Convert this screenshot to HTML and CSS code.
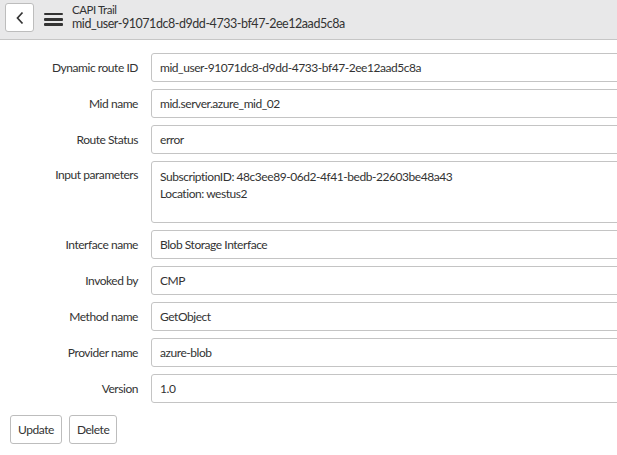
FILE: index.html
```html
<!DOCTYPE html>
<html>
<head>
  <title>CAPI Trail</title>
  <meta charset='utf-8'>
  <link rel="stylesheet" href="styles.css">
</head>
<body>

<div class='header'>
  <button class='back' type='button'>
    <svg width='10' height='14' viewBox='0 0 10 14'><path d='M7.5 1.5 L2.5 7 L7.5 12.5' fill='none' stroke='#333' stroke-width='1.7'/></svg>
  </button>
  <span class='burger'><i></i><i></i><i></i></span>
  <div class='title'>
    <div class='t1'>CAPI Trail</div>
    <div class='t2'>mid_user-91071dc8-d9dd-4733-bf47-2ee12aad5c8a</div>
  </div>
</div>

<form class='form'>
  <label class='row'><span class='lbl'>Dynamic route ID</span><span class='field'>mid_user-91071dc8-d9dd-4733-bf47-2ee12aad5c8a</span></label>
  <label class='row'><span class='lbl'>Mid name</span><span class='field'>mid.server.azure_mid_02</span></label>
  <label class='row'><span class='lbl'>Route Status</span><span class='field'>error</span></label>
  <label class='row'><span class='lbl top'>Input parameters</span><span class='field area'>SubscriptionID: 48c3ee89-06d2-4f41-bedb-22603be48a43<br>Location: westus2</span></label>
  <label class='row'><span class='lbl'>Interface name</span><span class='field'>Blob Storage Interface</span></label>
  <label class='row'><span class='lbl'>Invoked by</span><span class='field'>CMP</span></label>
  <label class='row'><span class='lbl'>Method name</span><span class='field'>GetObject</span></label>
  <label class='row'><span class='lbl'>Provider name</span><span class='field'>azure-blob</span></label>
  <label class='row'><span class='lbl'>Version</span><span class='field'>1.0</span></label>

  <div class='actions'>
    <button class='btn' type='button'>Update</button>
    <button class='btn' type='button'>Delete</button>
  </div>
</form>

</body>
</html>
```

FILE: styles.css
```css
html, body {
  margin:0;
  padding:0;
  overflow:hidden;
}

body {
  font-family:'Lato', 'Liberation Sans', sans-serif;
  font-size:12px;
  letter-spacing:-0.45px;
  color:#333;
  background:#fff;
  width:640px;
}

.header {
  display:flex;
  align-items:flex-start;
  height:39px;
  background:#e8e8e9;
  border-bottom:1px solid #c6c6c6;
  padding-left:5px;
}

.back {
  width:29px;
  height:29px;
  margin-top:3px;
  display:flex;
  align-items:center;
  justify-content:center;
  background:#fff;
  border:1px solid #bdbdbd;
  border-radius:3px;
  padding:0;
}

.burger {
  display:flex;
  flex-direction:column;
  gap:2.6px;
  width:19px;
  margin:12.5px 9px 0 10px;
}
.burger i {
  display:block;
  height:2.8px;
  background:#333;
  border-radius:1px;
}

.title {
  line-height:14px;
  margin-top:3px;
}
.t1 { font-size:11.5px; }
.t2 { font-size:12.5px; }

.form {
  padding:13px 0 0 10px;
}

.row {
  display:flex;
  margin-bottom:7px;
}

.lbl {
  width:128px;
  text-align:right;
  padding-right:13px;
  line-height:29px;
}
.lbl.top {
  line-height:28px;
}

.field {
  flex:1;
  height:27px;
  line-height:28px;
  border:1px solid #c4c4c4;
  border-radius:3px;
  padding:0 8px;
}

.field.area {
  height:54px;
  line-height:17px;
  padding-top:6px;
}

.actions {
  display:flex;
  gap:7px;
  margin-top:12px;
}

.btn {
  font:inherit;
  letter-spacing:inherit;
  color:#333;
  height:29px;
  padding:0 7px;
  background:#fff;
  border:1px solid #bdbdbd;
  border-radius:3px;
}
```
